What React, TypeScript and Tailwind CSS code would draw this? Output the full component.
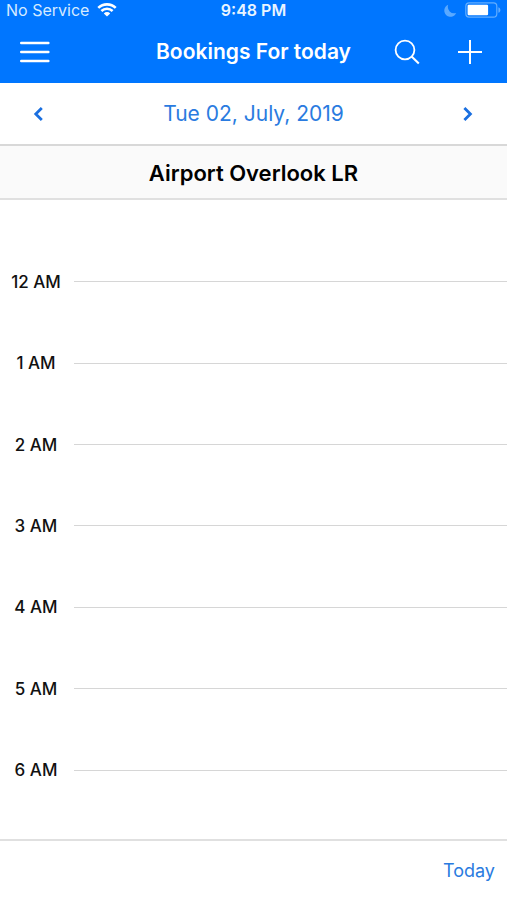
import { useState } from 'react'

const hours = ['12 AM', '1 AM', '2 AM', '3 AM', '4 AM', '5 AM', '6 AM']

const formatDate = (date: Date) => {
  const weekday = date.toLocaleDateString('en-US', { weekday: 'short' })
  const month = date.toLocaleDateString('en-US', { month: 'long' })
  const day = String(date.getDate()).padStart(2, '0')
  return `${weekday} ${day}, ${month}, ${date.getFullYear()}`
}

const StatusBar = () => (
  <div className="grid h-5 grid-cols-[1fr_auto_1fr] items-center px-1.5 text-base leading-5">
    <div className="flex items-center gap-2 text-[#d5eaff]">
      <span>No Service</span>
      <svg width="20" height="14" viewBox="0 0 20 14" fill="none" aria-hidden="true">
        <path d="M1.3 4.9a12.4 12.4 0 0 1 17.4 0" stroke="#fff" strokeWidth="2.6" />
        <path d="M4.4 8a8 8 0 0 1 11.2 0" stroke="#fff" strokeWidth="2.5" />
        <path d="M10 13.6 6.8 10.4a4.6 4.6 0 0 1 6.4 0z" fill="#fff" />
      </svg>
    </div>
    <span className="font-semibold text-[#e8f4ff]">9:48 PM</span>
    <div className="flex items-center justify-end gap-2">
      <svg width="13" height="13" viewBox="0 0 13 13" aria-hidden="true">
        <path d="M4.2.8a6.2 6.2 0 1 0 8 8.2A6.4 6.4 0 0 1 4.2.8z" fill="#5aa9ff" />
      </svg>
      <svg width="36" height="16" viewBox="0 0 36 16" fill="none" aria-hidden="true">
        <rect x="0.8" y="0.8" width="31" height="14.4" rx="3.4" stroke="#62adff" strokeWidth="1.2" />
        <rect x="2.6" y="2.8" width="20.5" height="10.4" rx="1.2" fill="#fff" />
        <path d="M33.4 5.2c2.6.8 2.6 4.8 0 5.6z" fill="#62adff" />
      </svg>
    </div>
  </div>
)

const App = () => {
  const [date, setDate] = useState(new Date(2019, 6, 2))

  const shiftDay = (days: number) => {
    setDate(d => new Date(d.getFullYear(), d.getMonth(), d.getDate() + days))
  }

  return (
    <div className="flex min-h-screen flex-col bg-white font-[Inter,sans-serif] text-black">
      <header className="bg-[#0076ff] text-white">
        <StatusBar />
        <div className="grid h-[63px] grid-cols-[1fr_auto_1fr] items-center px-5 pt-px">
          <button aria-label="Menu" className="w-fit">
            <svg width="30" height="22" viewBox="0 0 30 22" fill="none" stroke="currentColor" strokeWidth="2.4" strokeLinecap="round">
              <path d="M1.2 2h27.2M1.2 11h27.2M1.2 20h27.2" />
            </svg>
          </button>
          <h1 className="text-[21px] leading-7 font-semibold">Bookings For today</h1>
          <div className="flex items-center justify-end gap-[38px] pr-[5px]">
            <button aria-label="Search">
              <svg width="26" height="26" viewBox="0 0 26 26" fill="none" stroke="currentColor" strokeWidth="1.8">
                <circle cx="11" cy="11" r="9.4" />
                <path d="m17.6 17.6 7.2 7" strokeWidth="2.1" />
              </svg>
            </button>
            <button aria-label="Add booking">
              <svg width="24" height="24" viewBox="0 0 24 24" fill="none" stroke="currentColor" strokeWidth="2">
                <path d="M12 0v24M0 12h24" />
              </svg>
            </button>
          </div>
        </div>
      </header>

      <div className="flex h-[63px] items-center justify-between border-b-2 border-[#d8d8d8] px-8 pt-px text-[#2a7be0]">
        <button aria-label="Previous day" onClick={() => shiftDay(-1)}>
          <svg width="14" height="16" viewBox="0 0 14 16" fill="none" stroke="#1a6fe0" strokeWidth="2.8">
            <path d="M9.8 2 3.8 8l6 6" />
          </svg>
        </button>
        <span className="text-[21px] leading-7">{formatDate(date)}</span>
        <button aria-label="Next day" onClick={() => shiftDay(1)}>
          <svg width="14" height="16" viewBox="0 0 14 16" fill="none" stroke="#1a6fe0" strokeWidth="2.8">
            <path d="m3.4 2 6 6-6 6" />
          </svg>
        </button>
      </div>

      <h2 className="flex h-[54px] items-center justify-center border-b-2 border-[#e0e0e0] bg-[#fafafa] pt-px text-[22px] leading-7 font-semibold">
        Airport Overlook LR
      </h2>

      {/* Hour slots */}
      <main className="grid flex-1 auto-rows-fr pt-[41px] pb-7">
        {hours.map(hour => (
          <div key={hour} className="flex items-center gap-0.5">
            <span className="w-[72px] shrink-0 text-center text-[17px] leading-6 font-medium text-[#111111]">{hour}</span>
            <div className="flex-1 border-t border-[#d6d6d6]" />
          </div>
        ))}
      </main>

      <footer className="flex h-[61px] items-center justify-end border-t-2 border-[#e0e0e0] px-3 pt-px">
        <button className="text-lg leading-6 text-[#2a7be0]" onClick={() => setDate(new Date(2019, 6, 2))}>
          Today
        </button>
      </footer>
    </div>
  )
}

export default App
